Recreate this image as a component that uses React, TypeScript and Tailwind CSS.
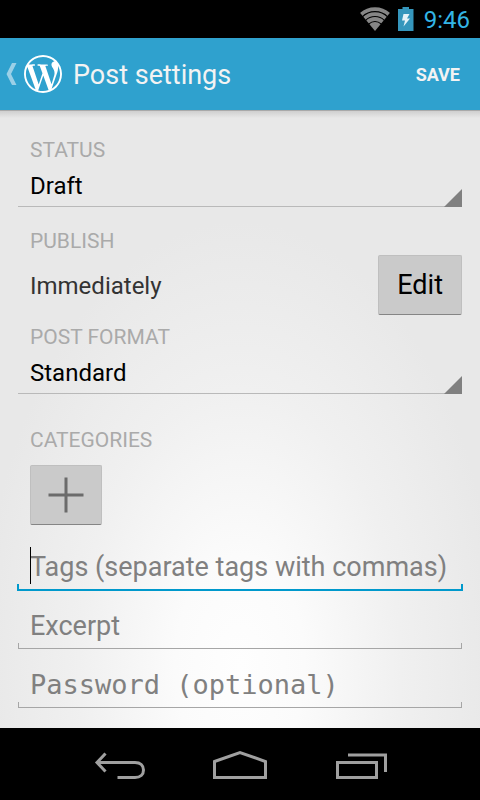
import type { ReactNode } from 'react';
import { SiWordpress } from 'react-icons/si';

const STATUSES = ['Draft', 'Published', 'Pending Review'];
const FORMATS = ['Standard', 'Aside', 'Gallery', 'Image'];

export default function App() {
  return (
    <div className="flex min-h-screen flex-col bg-black font-['Roboto',sans-serif]">
      <StatusBar />
      <ActionBar />
      <main className="flex-1 bg-[#e8e8e8] bg-[radial-gradient(ellipse_54%_72%_at_50%_90%,#fefefe_0%,#fbfbfb_25%,#f0f0f0_62%,#e8e8e8_100%)] px-[18px] pb-5">
        <div className="-mx-[18px] h-2 border-t border-[#a9a9a9] bg-linear-to-b from-[#cfcfcf] to-transparent" />
        <form className="flex flex-col pt-5" onSubmit={(e) => e.preventDefault()}>
          <FieldLabel htmlFor="status">STATUS</FieldLabel>
          <Spinner id="status" options={STATUSES} />

          <h2 className="mt-[22px] pl-3 text-[21px] leading-6 text-[#aaaaaa]">PUBLISH</h2>
          <div className="mt-0.5 flex items-center justify-between pl-3">
            <span className="pt-0.5 text-[24px] leading-8 text-[#333333]">Immediately</span>
            <HoloButton>
              <span className="px-[18px] text-[27px] leading-8 text-black">Edit</span>
            </HoloButton>
          </div>

          <FieldLabel htmlFor="format" className="mt-2.5">
            POST FORMAT
          </FieldLabel>
          <Spinner id="format" options={FORMATS} />

          <h2 className="mt-[34px] pl-3 text-[21px] leading-6 text-[#aaaaaa]">CATEGORIES</h2>
          <div className="mt-[13px] mb-1.5 pl-3">
            <HoloButton label="Add category">
              <svg viewBox="0 0 70 36" className="h-9 w-[70px]" fill="none" aria-hidden="true">
                <path d="M17.500 18h35M35 0.500v35" stroke="#6b6b6b" strokeWidth="3" />
              </svg>
            </HoloButton>
          </div>

          <TextField label="Tags (separate tags with commas)" active />
          <TextField label="Excerpt" />
          <TextField label="Password (optional)" type="password" />
        </form>
      </main>
      <NavBar />
    </div>
  );
}

function StatusBar() {
  return (
    <div className="flex h-[38px] items-center justify-end gap-2 pr-2.5">
      <svg viewBox="0 0 30 24" className="h-6 w-[30px]" fill="none" aria-hidden="true">
        <clipPath id="wifi">
          <path d="M15 24L-4 1V-2H34V1Z" />
        </clipPath>
        <g clipPath="url(#wifi)" stroke="#868686" strokeWidth="3.800">
          <circle cx="15" cy="23" r="20.800" />
          <circle cx="15" cy="23" r="15.800" />
          <circle cx="15" cy="23" r="11" />
          <circle cx="15" cy="23" r="4" strokeWidth="8" />
        </g>
      </svg>
      <svg viewBox="0 0 16 24" className="h-6 w-4" aria-hidden="true">
        <path d="M4.500 0h6.500v2H15.500v22H0V2h4.500z" fill="#3596bc" />
        <path d="M5.500 7h6L9 11.500h3L5.500 19.500 7 13.500H4z" fill="#e6f3f8" />
      </svg>
      <time className="ml-0.5 pt-0.5 text-[24px] leading-8 text-[#33b5e5]">9:46</time>
    </div>
  );
}

function ActionBar() {
  return (
    <header className="flex h-[72px] items-center justify-between bg-[#2fa1ce] pr-5 pl-1.5">
      <button type="button" aria-label="Navigate up" className="flex items-center">
        <svg viewBox="0 0 11 22" className="h-[22px] w-[11px]" aria-hidden="true">
          <path d="M6 0h4.500L5 11l5.500 11H6L0.500 11z" fill="#9bd0e7" />
        </svg>
        <SiWordpress className="ml-[7px] h-[38px] w-[38px] text-white" />
      </button>
      <h1 className="ml-[11px] flex-1 pt-0.5 text-[27px] leading-8 text-[#f3f3f3]">Post settings</h1>
      <button type="button" className="pt-0.5 text-[18px] leading-6 font-bold text-[#f3f3f3]">
        SAVE
      </button>
    </header>
  );
}

function FieldLabel({
  children,
  htmlFor,
  className = '',
}: {
  children: ReactNode;
  htmlFor: string;
  className?: string;
}) {
  return (
    <label htmlFor={htmlFor} className={`pl-3 text-[21px] leading-6 text-[#aaaaaa] ${className}`}>
      {children}
    </label>
  );
}

function Spinner({ id, options }: { id: string; options: string[] }) {
  return (
    <div className="relative">
      <select
        id={id}
        className="block h-[45px] w-full appearance-none border-b border-[#b9b9b9] bg-transparent pt-1 pr-6 pl-3 text-[24px] text-black outline-none"
      >
        {options.map((o) => (
          <option key={o}>{o}</option>
        ))}
      </select>
      <svg
        viewBox="0 0 18 18"
        className="pointer-events-none absolute right-0 bottom-0 h-[18px] w-[18px]"
        aria-hidden="true"
      >
        <path d="M18 0v18H0z" fill="#808080" />
      </svg>
    </div>
  );
}

function HoloButton({ children, label }: { children: ReactNode; label?: string }) {
  return (
    <button
      type="button"
      aria-label={label}
      className="flex h-[60px] items-center justify-center rounded-[2px] border border-[#bfbfbf] border-b-[#858585] bg-[#cacaca]"
    >
      {children}
    </button>
  );
}

function TextField({
  label,
  type = 'text',
  active = false,
}: {
  label: string;
  type?: string;
  active?: boolean;
}) {
  return (
    <div className="relative">
      <input
        type={type}
        aria-label={label}
        placeholder={label}
        className={`block h-[59px] w-full bg-transparent px-3 pt-4 pb-1 text-[27px] outline-none placeholder:text-[#808080] ${
          type === 'password' ? "font-['DejaVu_Sans_Mono',monospace]" : ''
        }`}
      />
      {active && <span className="absolute bottom-1.5 left-3 h-[37px] w-px bg-black" />}
      <span
        className={`pointer-events-none absolute ${
          active
            ? '-inset-x-px -bottom-px h-[7px] border-x-2 border-b-2 border-[#0099cc]'
            : 'inset-x-0 bottom-0 h-1.5 border-x border-b border-[#a6a6a6]'
        }`}
      />
    </div>
  );
}

function NavBar() {
  return (
    <nav className="flex h-[72px] items-center justify-center gap-[66px] pt-1">
      <button type="button" aria-label="Back">
        <svg viewBox="0 0 54 32" className="h-8 w-[54px]" fill="none" aria-hidden="true">
          <path
            d="M5 12.500H42C47.500 12.500 50.500 15.500 50.500 20S47.500 27.500 42 27.500H24.500M12.500 3.500L4 12.500 12.500 21.500"
            stroke="#a0a0a0"
            strokeWidth="3"
          />
        </svg>
      </button>
      <button type="button" aria-label="Home">
        <svg viewBox="0 0 54 32" className="h-8 w-[54px]" fill="none" aria-hidden="true">
          <path d="M1.500 11.500L27 2.500 52.500 11.500V27.500H1.500z" stroke="#a0a0a0" strokeWidth="3" />
        </svg>
      </button>
      <button type="button" aria-label="Recent apps">
        <svg viewBox="0 0 54 32" className="h-8 w-[54px]" fill="none" aria-hidden="true">
          <path d="M4.500 12.500H43.500V27.500H4.500zM15 5H52.500V22" stroke="#a0a0a0" strokeWidth="3" />
        </svg>
      </button>
    </nav>
  );
}
